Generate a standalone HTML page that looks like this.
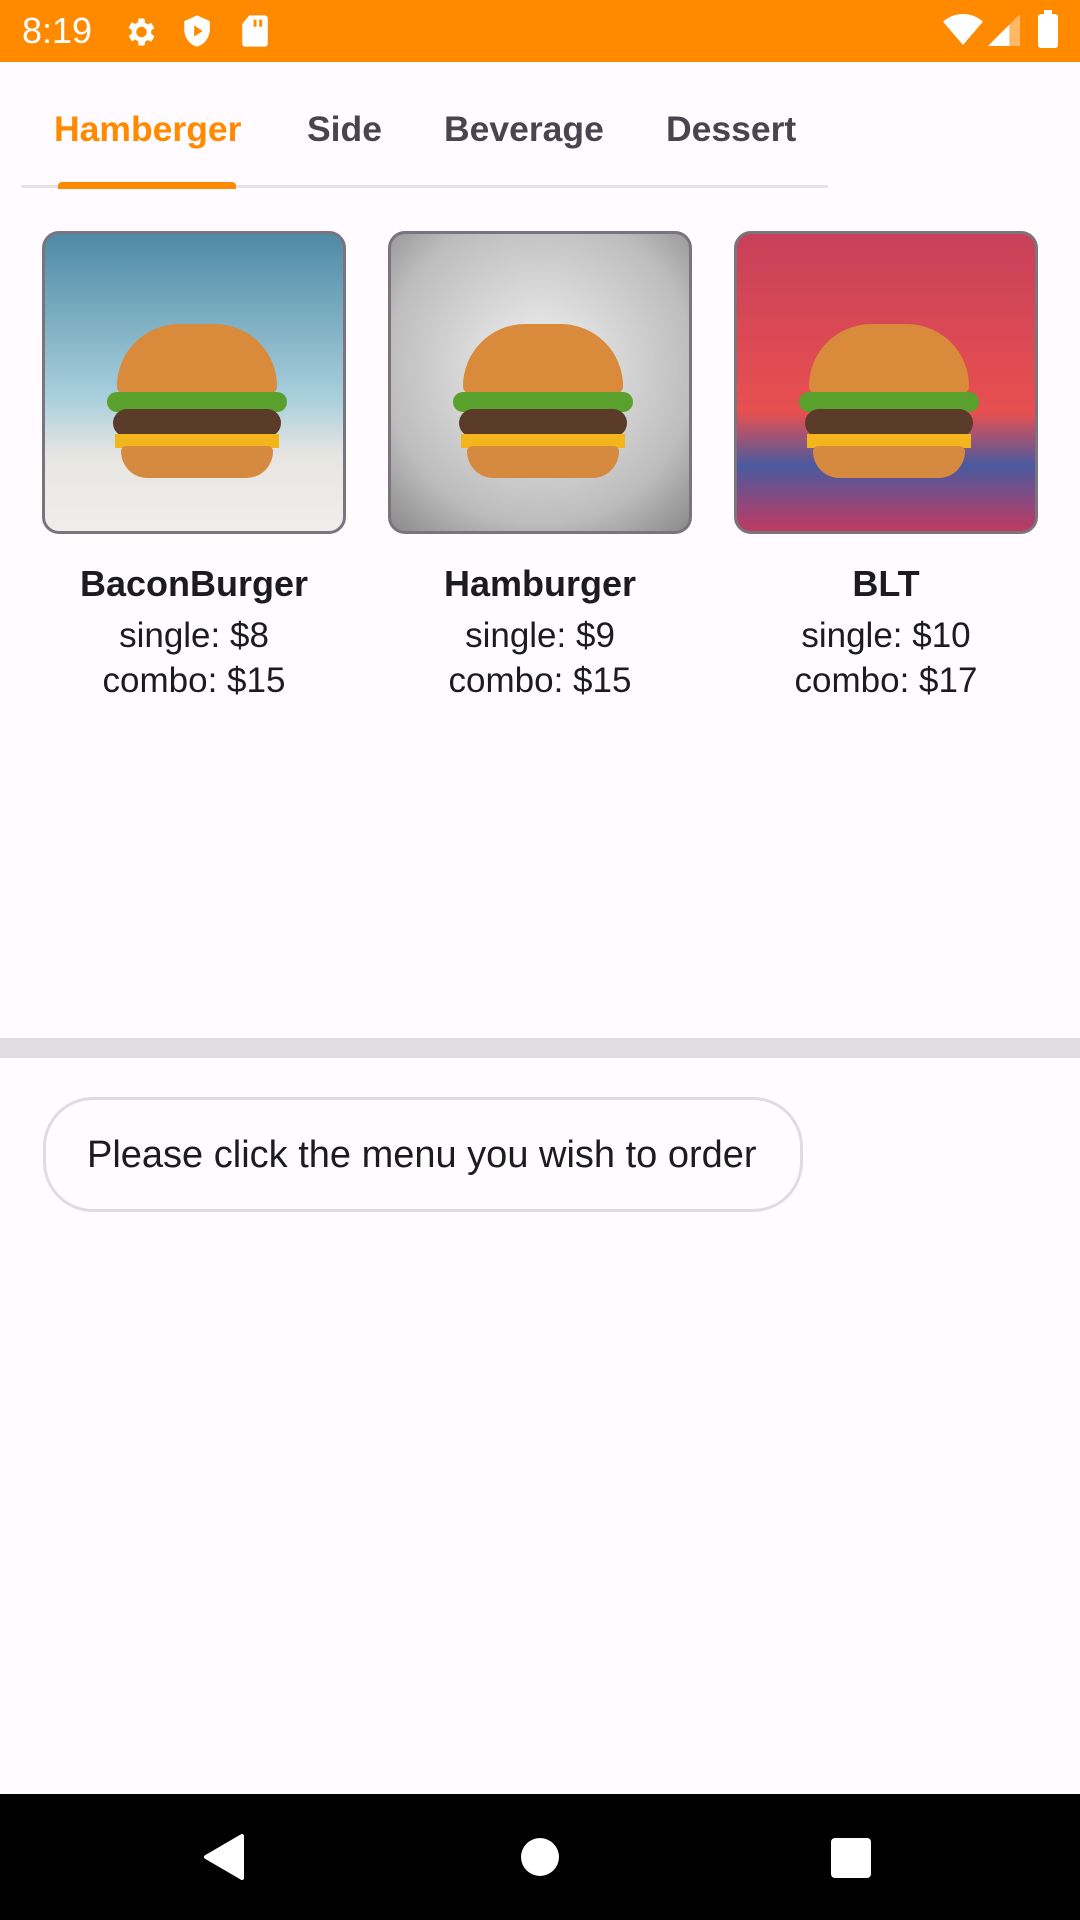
<!DOCTYPE html>
<html><head><meta charset="utf-8"><style>
*{margin:0;padding:0;box-sizing:border-box}
body{width:1080px;height:1920px;background:#fffbfe;font-family:"Liberation Sans",Roboto,sans-serif;position:relative;overflow:hidden;color:#1c1b1f}
.sb{position:absolute;left:0;top:0;width:1080px;height:62px;background:#ff8a00;color:#fff}
.tab{position:absolute;top:109px;font-size:35.5px;font-weight:bold;color:#49454f}
.card{position:absolute;top:231px;width:304px;height:303px;border-radius:17px;border:3px solid #79747e;overflow:hidden}
.nm{position:absolute;width:340px;text-align:center;font-size:36px;font-weight:bold;top:563px}
.pr{position:absolute;width:340px;text-align:center;font-size:35px;line-height:45px;top:613px}
.bun{position:absolute;left:72px;width:160px;height:70px;border-radius:80px 80px 10px 10px;background:#d98a3a;top:90px}
.meat{position:absolute;left:68px;width:168px;height:28px;border-radius:14px;background:#5a3a28;top:175px}
.let{position:absolute;left:62px;width:180px;height:20px;border-radius:10px;background:#5aa02c;top:158px}
.ch{position:absolute;left:70px;width:164px;height:14px;background:#f2b51c;top:200px}
.bot{position:absolute;left:76px;width:152px;height:32px;border-radius:6px 6px 30px 30px;background:#d58a40;top:212px}
</style></head><body>
<div class="sb">
<div style="position:absolute;left:22px;top:10px;font-size:36px">8:19</div>
<svg style="position:absolute;left:122px;top:14px" width="36" height="36" viewBox="0 0 24 24" fill="#fff"><path d="M19.4 13a7.5 7.5 0 000-2l2.1-1.6-2-3.5-2.5 1a7 7 0 00-1.7-1L15 3h-4l-.4 2.6a7 7 0 00-1.7 1l-2.5-1-2 3.5L6.6 11a7.5 7.5 0 000 2l-2.1 1.6 2 3.5 2.5-1a7 7 0 001.7 1L11 21h4l.4-2.6a7 7 0 001.7-1l2.5 1 2-3.5zM13 15.5a3.5 3.5 0 110-7 3.5 3.5 0 010 7z"/></svg>
<svg style="position:absolute;left:180px;top:13px" width="34" height="36" viewBox="0 0 24 24" fill="#fff"><path d="M12 1L3 5v6c0 5.5 3.8 10.7 9 12 5.2-1.3 9-6.5 9-12V5zm-2 15V8l6 4z"/></svg>
<svg style="position:absolute;left:240px;top:14px" width="30" height="34" viewBox="0 0 20 24" fill="#fff"><path d="M6 1h11a2 2 0 012 2v18a2 2 0 01-2 2H3a2 2 0 01-2-2V7zm3 3v5h2V4zm4 0v5h2V4z"/></svg>
<svg style="position:absolute;left:943px;top:14px" width="40" height="32" viewBox="0 0 24 18" fill="#fff"><path d="M12 18L0 4a18 18 0 0124 0z"/></svg>
<svg style="position:absolute;left:988px;top:14px" width="32" height="32" viewBox="0 0 24 24" fill="#fff"><path d="M24 0v24H0z" opacity=".4"/><path d="M16 8v16H0z"/></svg>
<div style="position:absolute;left:1038px;top:14px;width:20px;height:34px;background:#fff;border-radius:3px"></div>
<div style="position:absolute;left:1044px;top:10px;width:8px;height:5px;background:#fff"></div>
</div>
<div class="tab" style="left:54px;color:#ff8a00">Hamberger</div>
<div class="tab" style="left:307px">Side</div>
<div class="tab" style="left:444px">Beverage</div>
<div class="tab" style="left:666px">Dessert</div>
<div style="position:absolute;left:21px;top:185px;width:807px;height:3px;background:#e6e0e9"></div>
<div style="position:absolute;left:58px;top:182px;width:178px;height:7px;border-radius:4px 4px 0 0;background:#ff8a00"></div>

<div class="card" style="left:42px;background:linear-gradient(#4e8aa6,#a8cfdc 55%,#e8e6e2 75%,#f0eeea)">
<div class="bun"></div><div class="let"></div><div class="meat"></div><div class="ch"></div><div class="bot"></div></div>
<div class="card" style="left:388px;background:radial-gradient(circle at 50% 45%,#f2f2f2,#bdbdbd 70%,#8a8a8a)">
<div class="bun"></div><div class="let"></div><div class="meat"></div><div class="ch"></div><div class="bot"></div></div>
<div class="card" style="left:734px;background:linear-gradient(#c8405a,#e85050 60%,#4a5aa0 78%,#c03a60)">
<div class="bun"></div><div class="let"></div><div class="meat"></div><div class="ch"></div><div class="bot"></div></div>

<div class="nm" style="left:24px">BaconBurger</div>
<div class="pr" style="left:24px">single: $8<br>combo: $15</div>
<div class="nm" style="left:370px">Hamburger</div>
<div class="pr" style="left:370px">single: $9<br>combo: $15</div>
<div class="nm" style="left:716px">BLT</div>
<div class="pr" style="left:716px">single: $10<br>combo: $17</div>

<div style="position:absolute;left:0;top:1038px;width:1080px;height:20px;background:#e0dde0"></div>
<div style="position:absolute;left:43px;top:1097px;width:760px;height:115px;border:3px solid #e0dbe0;border-radius:50px;font-size:38px;line-height:111px;padding-left:41px;white-space:nowrap">Please click the menu you wish to order</div>

<div style="position:absolute;left:0;top:1794px;width:1080px;height:126px;background:#000">
<svg style="position:absolute;left:204px;top:40px" width="40" height="46" viewBox="0 0 20 23"><path d="M19 1v21L1 11.5z" fill="#fff" stroke="#fff" stroke-linejoin="round" stroke-width="2"/></svg>
<div style="position:absolute;left:521px;top:44px;width:38px;height:38px;border-radius:50%;background:#fff"></div>
<div style="position:absolute;left:831px;top:44px;width:40px;height:40px;border-radius:4px;background:#fff"></div>
</div>
</body></html>
